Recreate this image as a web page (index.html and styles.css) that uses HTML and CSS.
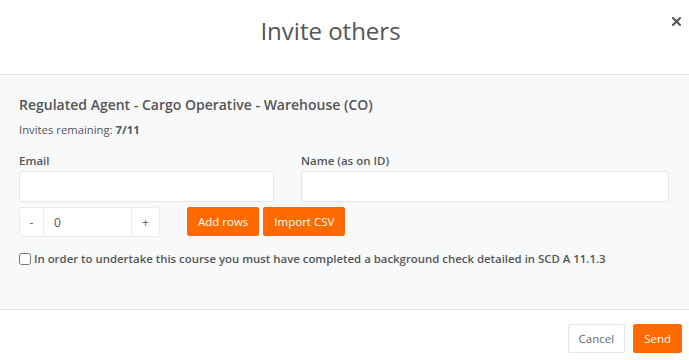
FILE: index.html
```html
<!DOCTYPE html>
<html lang="en">
<head>
    <meta charset="UTF-8">
    <meta name="viewport" content="width=device-width, initial-scale=1.0">
    <title>Invite others</title>
    <link rel="stylesheet" href="styles.css">
</head>
<body>
    <div class="modal">
        <div class="modal-header">
            <h1 class="modal-title">Invite others</h1>
            <button class="close" aria-label="Close">
                <svg width="9" height="9" viewBox="0 0 9 9">
                    <path d="M1 1 L8 8 M8 1 L1 8" stroke="#555" stroke-width="2" stroke-linecap="square"/>
                </svg>
            </button>
        </div>

        <div class="modal-body">
            <h2 class="course-title">Regulated Agent - Cargo Operative - Warehouse (CO)</h2>
            <p class="invites">Invites remaining: <strong>7/11</strong></p>

            <div class="invite-row">
                <div class="field">
                    <label for="email">Email</label>
                    <input type="text" id="email" class="form-control">
                </div>
                <div class="field">
                    <label for="name">Name (as on ID)</label>
                    <input type="text" id="name" class="form-control">
                </div>
            </div>

            <div class="row-tools">
                <div class="counter">
                    <button class="counter-btn minus">-</button>
                    <input type="text" class="counter-input" value="0">
                    <button class="counter-btn plus">+</button>
                </div>
                <button class="btn btn-orange">Add rows</button>
                <button class="btn btn-orange">Import CSV</button>
            </div>

            <label class="check">
                <input type="checkbox">
                <span>In order to undertake this course you must have completed a background check detailed in SCD A 11.1.3</span>
            </label>
        </div>

        <div class="modal-footer">
            <button class="btn btn-default">Cancel</button>
            <button class="btn btn-orange">Send</button>
        </div>
    </div>
</body>
</html>
```

FILE: styles.css
```css
body {
    margin: 0;
    font-family: "Open Sans", Arial, sans-serif;
    color: #555;
    background-color: #fff;
}
.modal {
    width: 689px;
}
.modal-header {
    position: relative;
    padding: 15px 48px 27px 20px;
    text-align: center;
    border-bottom: 1px solid #e5e5e5;
}
.modal-title {
    margin: 0;
    font-size: 24px;
    font-weight: 400;
    line-height: 32px;
    color: #555;
}
.close {
    position: absolute;
    top: 14px;
    right: 8px;
    padding: 0;
    border: none;
    background: none;
    cursor: pointer;
}
.modal-body {
    padding: 19px 20px 41px 19px;
    background-color: #f8f9fb;
    border-bottom: 1px solid #e5e5e5;
}
.course-title {
    margin: 0;
    font-size: 14px;
    font-weight: 600;
    line-height: 22px;
}
.invites {
    margin: 5px 0 0;
    font-size: 11.3px;
    line-height: 18px;
}
.invites strong {
    font-weight: 700;
}
.invite-row {
    display: grid;
    grid-template-columns: 255px 368px;
    column-gap: 27px;
    margin-top: 13px;
}
.field label {
    display: block;
    margin-bottom: 1px;
    font-size: 11.5px;
    font-weight: 600;
    line-height: 18px;
}
.form-control {
    box-sizing: border-box;
    display: block;
    width: 100%;
    height: 31px;
    margin: 0;
    border: 1px solid #e6e6e6;
    border-radius: 2px;
    background-color: #fff;
}
.row-tools {
    display: flex;
    align-items: flex-start;
    gap: 4px;
    margin-top: 5px;
}
.counter {
    display: flex;
    height: 30px;
    margin-right: 23px;
    border: 1px solid #eaeaea;
    border-radius: 3px;
    background-color: #fff;
    box-sizing: border-box;
}
.counter-btn {
    padding: 0;
    border: none;
    background: #fff;
    font-family: inherit;
    font-size: 12px;
    color: #666;
}
.minus {
    width: 24px;
    border-right: 1px solid #eaeaea;
}
.plus {
    width: 28px;
    border-left: 1px solid #eaeaea;
}
.counter-input {
    box-sizing: border-box;
    width: 87px;
    padding: 0 0 0 10px;
    border: none;
    font-family: inherit;
    font-size: 12px;
    color: #555;
    outline: none;
}
.btn {
    box-sizing: border-box;
    height: 29px;
    padding: 0 10px;
    border: 1px solid transparent;
    border-radius: 2px;
    font-family: inherit;
    font-size: 11.5px;
    line-height: 27px;
    cursor: pointer;
}
.btn-orange {
    background-color: #ff6a00;
    border-color: #ff6a00;
    color: #fff;
}
.btn-default {
    background-color: #fff;
    border-color: #e5e5e5;
    color: #666;
}
.check {
    display: flex;
    align-items: center;
    margin-top: 13px;
    font-size: 11.4px;
    font-weight: 600;
    line-height: 18px;
}
.check input {
    width: 12px;
    height: 12px;
    margin: 0 3px 0 0;
}
.modal-footer {
    display: flex;
    justify-content: flex-end;
    gap: 8px;
    padding: 14px 7px;
}
.modal-footer .btn {
    height: 29px;
}
```
